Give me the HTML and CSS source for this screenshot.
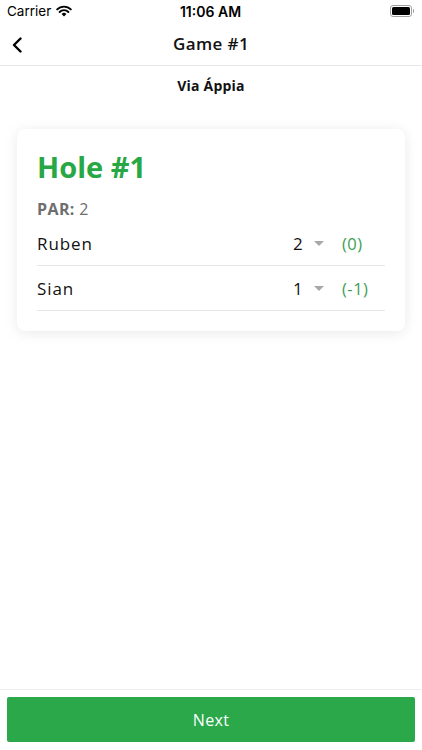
FILE: index.html
```html
<!DOCTYPE html>
<html lang="en">
<head>
    <meta charset="UTF-8">
    <meta name="viewport" content="width=device-width, initial-scale=1.0">
    <title>Game #1</title>
    <link rel="stylesheet" href="styles.css">
</head>
<body>
    <div class="status-bar">
        <div class="carrier">
            Carrier
            <svg class="wifi" width="16" height="12" viewBox="0 0 16 12">
                <path d="M8 11.5 L5.6 9 A3.4 3.4 0 0 1 10.4 9 Z" fill="#000"/>
                <path d="M3.6 7 A6.2 6.2 0 0 1 12.4 7" stroke="#000" stroke-width="1.9" fill="none" stroke-linecap="round"/>
                <path d="M1.2 4.4 A9.6 9.6 0 0 1 14.8 4.4" stroke="#000" stroke-width="1.9" fill="none" stroke-linecap="round"/>
            </svg>
        </div>
        <div class="clock">11:06 AM</div>
        <div class="battery">
            <span class="battery-body"><span class="battery-level"></span></span>
            <span class="battery-tip"></span>
        </div>
    </div>

    <header class="nav">
        <svg class="back" width="12" height="16" viewBox="0 0 12 16">
            <path d="M9.5 1.5 L3 8 L9.5 14.5" stroke="#000" stroke-width="2.4" fill="none" stroke-linecap="round" stroke-linejoin="round"/>
        </svg>
        <h1 class="nav-title">Game #1</h1>
    </header>

    <main>
        <div class="course">Via Áppia</div>

        <div class="hole-card">
            <h2 class="hole-title">Hole #1</h2>
            <div class="par"><b>PAR:</b> 2</div>

            <div class="player-row">
                <span class="player-name">Ruben</span>
                <span class="score">2</span>
                <span class="caret"></span>
                <span class="diff">(0)</span>
            </div>
            <div class="player-row">
                <span class="player-name">Sian</span>
                <span class="score">1</span>
                <span class="caret"></span>
                <span class="diff">(-1)</span>
            </div>
        </div>
    </main>

    <footer>
        <button class="next-btn" type="button">Next</button>
    </footer>
</body>
</html>
```

FILE: styles.css
```css
/* Base */
body {
    margin: 0;
    padding: 0;
    height: 750px;
    display: flex;
    flex-direction: column;
    background-color: #fff;
    color: #111;
    font-family: "Open Sans", "DejaVu Sans", sans-serif;
}

/* Status bar */
.status-bar {
    height: 22px;
    display: flex;
    align-items: center;
    justify-content: space-between;
    padding: 0 8px 0 7px;
    font-family: Inter, "Liberation Sans", sans-serif;
    font-size: 13.5px;
    color: #000;
}

.carrier {
    display: flex;
    align-items: center;
    gap: 5px;
    width: 100px;
}

.clock {
    font-weight: 600;
    font-size: 14px;
}

.battery {
    width: 100px;
    display: flex;
    justify-content: flex-end;
    align-items: center;
}

.battery-body {
    width: 18px;
    height: 8px;
    border: 1px solid #a0a0a0;
    border-radius: 3px;
    padding: 1px;
    display: flex;
}

.battery-level {
    flex: 1;
    background-color: #000;
    border-radius: 1.5px;
}

.battery-tip {
    width: 1.5px;
    height: 4px;
    margin-left: 1px;
    background-color: #a0a0a0;
    border-radius: 0 1px 1px 0;
}

/* Navigation */
.nav {
    position: relative;
    height: 43px;
    display: flex;
    align-items: center;
    justify-content: center;
    border-bottom: 1px solid #e8e8e8;
}

.nav .back {
    position: absolute;
    left: 11px;
    top: 15px;
}

.nav-title {
    margin: 0;
    font-size: 17px;
    font-weight: 600;
    letter-spacing: 0.4px;
}

/* Content */
main {
    flex-grow: 1;
}

.course {
    text-align: center;
    font-size: 14px;
    font-weight: 700;
    line-height: 20px;
    margin-top: 10px;
    letter-spacing: 0.2px;
}

.hole-card {
    margin: 33px 17px 0;
    padding: 20px 20px 20px;
    background-color: #fff;
    border-radius: 8px;
    box-shadow: 0 2px 14px rgba(0, 0, 0, 0.09);
}

.hole-title {
    margin: 0;
    color: #28a745;
    font-size: 29px;
    line-height: 36px;
    font-weight: 700;
}

.par {
    margin-top: 14px;
    font-size: 16px;
    line-height: 20px;
    color: #6e6e6e;
    letter-spacing: 0.4px;
}

.par b {
    font-weight: 700;
}

.player-row {
    display: flex;
    align-items: center;
    height: 44px;
    border-bottom: 1px solid #e6e6e6;
    font-size: 17px;
    letter-spacing: 0.9px;
}

.par + .player-row {
    margin-top: 2px;
}

.player-name {
    flex-grow: 1;
}

.score {
    width: 14px;
}

.caret {
    width: 0;
    height: 0;
    margin: 0 18px 0 7px;
    border-left: 5.5px solid transparent;
    border-right: 5.5px solid transparent;
    border-top: 5px solid #a8a8a8;
}

.diff {
    width: 43px;
    color: #3c9f53;
    font-size: 16.5px;
    letter-spacing: 0.5px;
}

/* Bottom bar */
footer {
    border-top: 1px solid #eeeeee;
    padding: 7px 7px 8px;
}

.next-btn {
    display: block;
    width: 100%;
    height: 45px;
    border: none;
    border-radius: 2px;
    background-color: #2aa84a;
    color: #fff;
    font-family: "Open Sans", "DejaVu Sans", sans-serif;
    font-size: 16px;
    letter-spacing: 0.3px;
    cursor: pointer;
}
```
